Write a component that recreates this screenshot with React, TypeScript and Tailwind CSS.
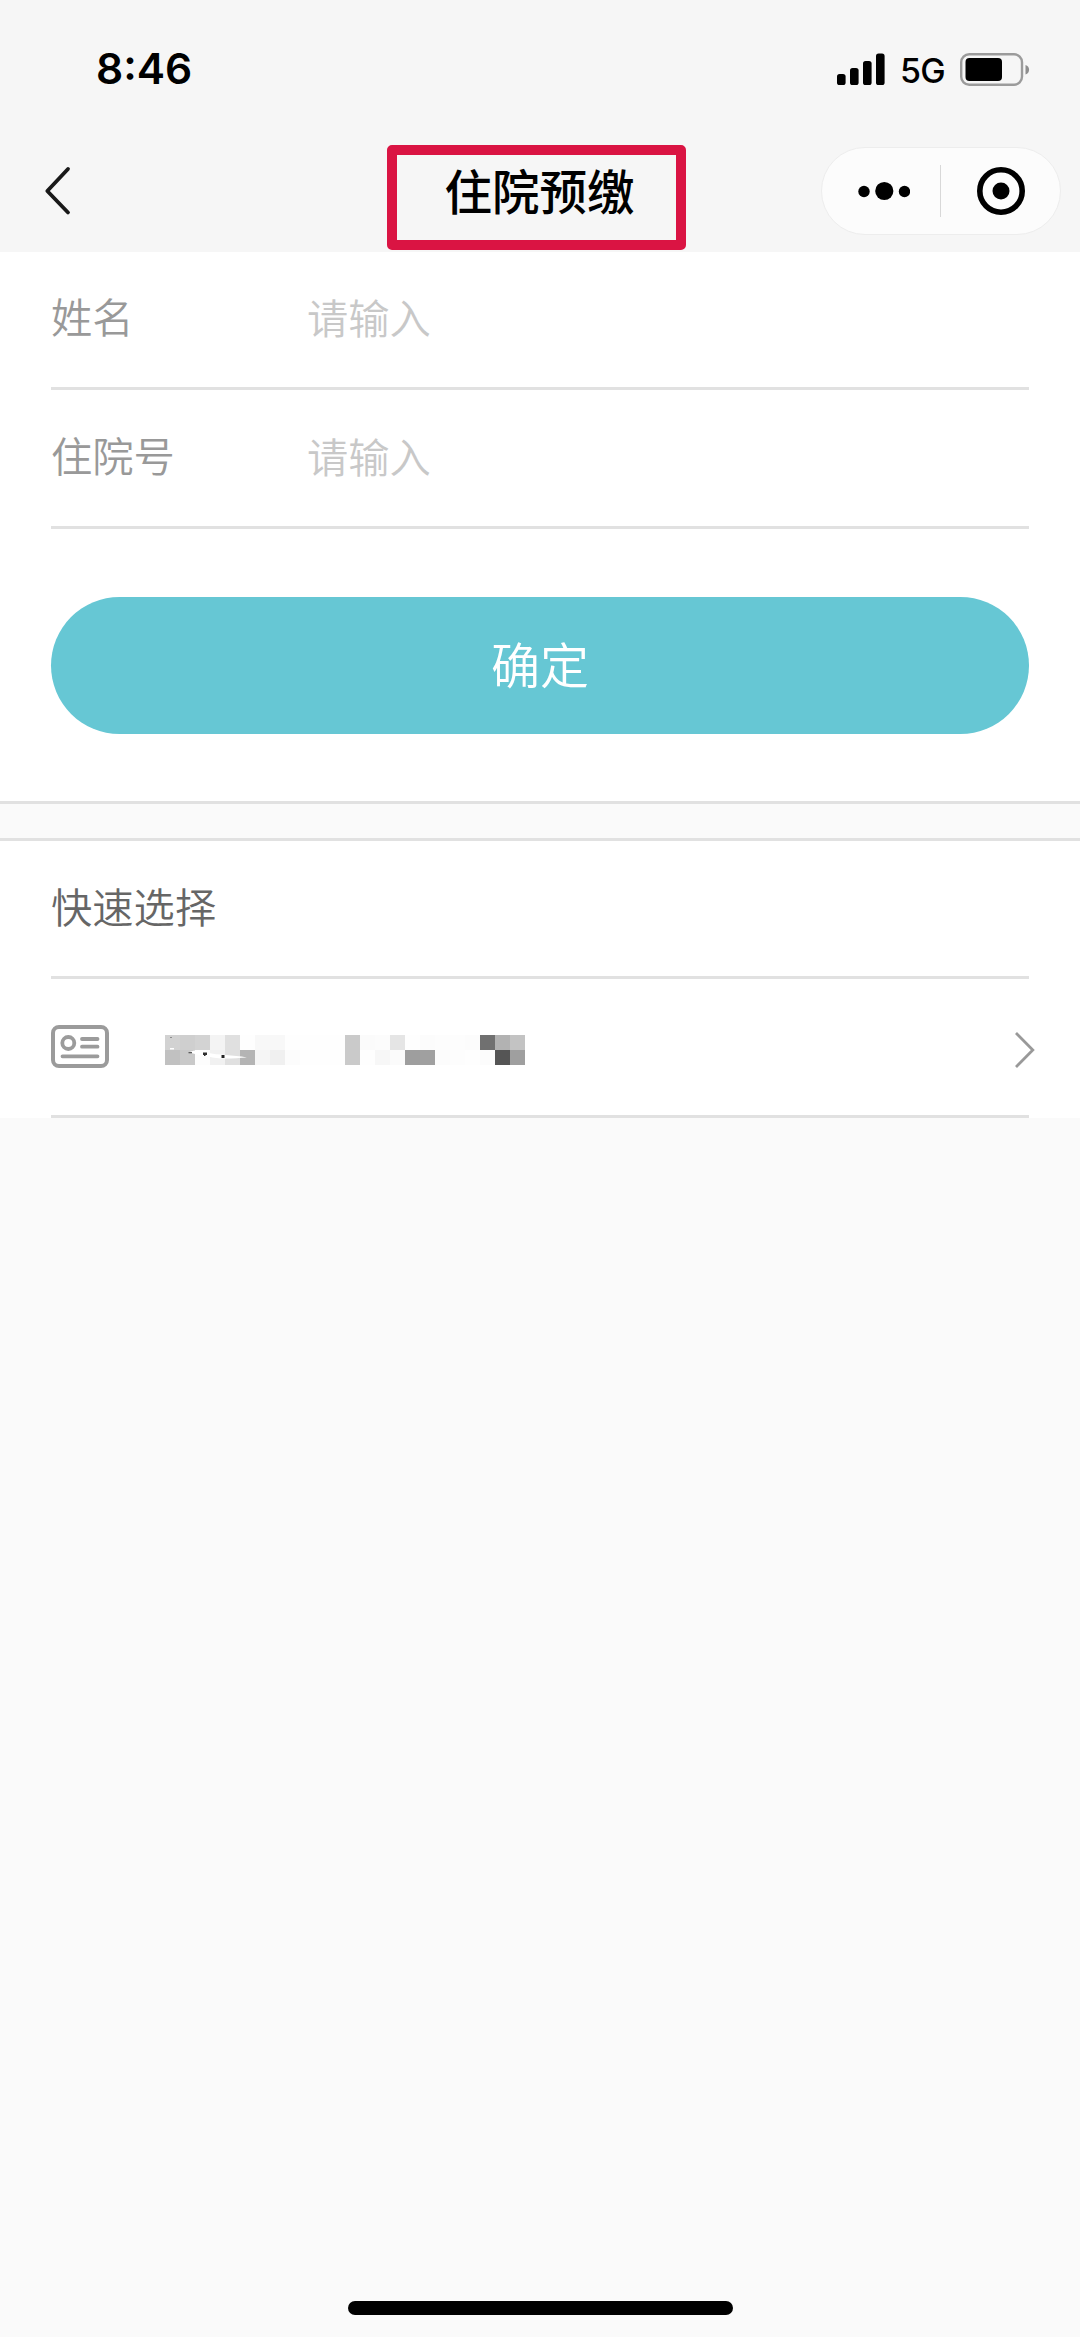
import { useState } from 'react'

// Mosaic cells covering the patient's name and number, 15px each
const maskRows = [
  [
    '#d2d2d2', '#cfcfcf', '#d3d3d3', '#f4f4f4', '#e0e0e0', '#fefefe', '#f8f8f8', '#f8f8f8', '#fefefe', '#fefefe', '#fefefe', '#fefefe',
    '#cacaca', '#fbfbfb', '#fcfcfc', '#e5e5e5', '#fefefe', '#fcfcfc', '#fdfdfd', '#fdfdfd', '#fcfcfc', '#707070', '#b2b2b2', '#c3c3c3',
  ],
  [
    '#c1c1c1', '#c9c9c9', '#fdfdfd', '#f1f1f1', '#e0e0e0', '#b4b4b4', '#f5f5f5', '#f0f0f0', '#fcfcfc', '#fefefe', '#fefefe', '#fefefe',
    '#cacaca', '#fefefe', '#f7f7f7', '#fbfbfb', '#9e9e9e', '#a0a0a0', '#fcfcfc', '#fdfdfd', '#fefefe', '#fcfcfc', '#555555', '#9f9f9f',
  ],
]

const SignalIcon = () => (
  <svg width="48" height="33" viewBox="0 0 48 33" fill="#000">
    <rect x="0" y="21" width="8.6" height="11" rx="2.6" />
    <rect x="13" y="15" width="8.6" height="17" rx="2.6" />
    <rect x="26" y="8" width="8.6" height="24" rx="2.6" />
    <rect x="39" y="0.5" width="8.6" height="31.5" rx="2.6" />
  </svg>
)

const BatteryIcon = () => (
  <svg width="70" height="33" viewBox="0 0 70 33" fill="none">
    <rect x="1.2" y="1.2" width="60.800" height="30.600" rx="8" stroke="#9b9b9b" strokeWidth="2.4" />
    <rect x="5.5" y="5" width="36.5" height="23" rx="4" fill="#000" />
    <path d="M65.5 12c2.4.7 3.6 2.5 3.6 4.7s-1.2 4-3.6 4.7z" fill="#8e8e8e" />
  </svg>
)

const BackIcon = () => (
  <svg width="28" height="50" viewBox="0 0 28 50" fill="none" stroke="#191919" strokeWidth="3.8" strokeLinecap="round" strokeLinejoin="round">
    <path d="M25 3L4.300 25L25 46.500" />
  </svg>
)

const CardIcon = () => (
  <svg width="58" height="43" viewBox="0 0 58 43" fill="none" stroke="#9b9b9b" strokeLinecap="round">
    <rect x="2" y="2" width="54" height="39" rx="6" strokeWidth="4" />
    <circle cx="17.300" cy="18" r="6" strokeWidth="3.8" />
    <path d="M31 14h15.500M31 21.700h15.500M11.500 31.300h35" strokeWidth="3.8" />
  </svg>
)

const ArrowIcon = () => (
  <svg width="20" height="36" viewBox="0 0 20 36" fill="none" stroke="#999" strokeWidth="2.8">
    <path d="M1 1L17.800 18L1 35" />
  </svg>
)

// Brush marks left over the first part of the mosaic
const MaskSmudge = () => (
  <svg className="absolute top-0 left-0" width="90" height="30" viewBox="0 0 90 30">
    <path d="M24 17.500C29 14.500 37 14.500 42 17.500C53 20.500 68 19.500 82 22.500C68 23.500 52 24.500 44 21.500C37 21 31 19 24 17.500z" fill="#fff" />
    <path d="M5 13h4v1.500H5z" fill="#fff" />
    <path d="M5 2h2v1H5z" fill="#8c8c8c" />
    <path d="M23.500 17h3.500v1.300h-3.500z" fill="#5c5c5c" />
    <path d="M38 17.500h4v2.500h-1.500v1h-1.500v-1h-1z" fill="#2f2f2f" />
    <path d="M56.500 20h3v3h-3z" fill="#222" />
  </svg>
)

type FieldProps = {
  label: string
  value: string
  onChange: (value: string) => void
}

function Field({ label, value, onChange }: FieldProps) {
  return (
    <label className="flex h-[139px] items-center border-b-[3px] border-[#e1e1e1] pb-[6px]">
      <span className="w-[256px] text-[#999]">{label}</span>
      <input
        value={value}
        onChange={(e) => onChange(e.target.value)}
        placeholder="请输入"
        className="mt-[2px] h-[60px] flex-1 bg-transparent outline-none placeholder:text-[#c8c8c8]"
      />
    </label>
  )
}

export default function App() {
  const [name, setName] = useState('')
  const [admissionNo, setAdmissionNo] = useState('')

  return (
    <div className="flex h-[2337px] w-[1080px] flex-col overflow-hidden bg-[#fafafa] font-['Noto_Sans_CJK_SC',sans-serif] text-[41.3px] font-[350]">
      <header className="h-[252px] bg-[#f6f6f6]">
        {/* Status bar */}
        <div className="flex h-[145px] items-start justify-between pt-[52px] pr-[50px] pl-[96px] font-['Inter',sans-serif]">
          <span className="text-[42.5px] leading-[33px] font-semibold text-black">8:46</span>
          <div className="flex items-center">
            <SignalIcon />
            <span className="ml-[15px] w-[60px] pt-[2px] text-[34px] leading-[33px] font-medium tracking-[-0.8px] text-black">5G</span>
            <BatteryIcon />
          </div>
        </div>

        {/* Nav bar */}
        <div className="grid h-[105px] grid-cols-[387px_299px_1fr] items-start">
          <button className="mt-[21px] ml-[43px] w-[28px]">
            <BackIcon />
          </button>
          <h1 className="flex h-[105px] items-center justify-center rounded-[5px] border-[10px] border-[#da1443] pb-[16px] pl-[6px] text-[47.5px] font-medium text-black">
            住院预缴
          </h1>
          <div className="mt-[2px] mr-[19px] ml-auto flex h-[88px] w-[240px] items-center rounded-full border border-[#ededed] bg-[#fcfcfc]">
            <svg className="ml-[36px]" width="52" height="20" viewBox="0 0 52 20">
              <circle cx="6" cy="10.500" r="5.700" />
              <circle cx="26.300" cy="10" r="9.100" />
              <circle cx="46.500" cy="10.500" r="5.700" />
            </svg>
            <span className="ml-[30px] h-[52px] w-px bg-[#d8d8d8]" />
            <svg className="ml-[36px]" width="48" height="48" viewBox="0 0 48 48">
              <circle cx="24" cy="24" r="21.200" fill="none" stroke="#000" strokeWidth="5.600" />
              <circle cx="24" cy="24" r="8.500" />
            </svg>
          </div>
        </div>
      </header>

      {/* Form */}
      <section className="h-[552px] border-b-[3px] border-[#e1e1e1] bg-white px-[51px]">
        <div className="-mt-px">
          <Field label="姓名" value={name} onChange={setName} />
          <Field label="住院号" value={admissionNo} onChange={setAdmissionNo} />
        </div>
        <button className="mt-[68px] h-[137px] w-full rounded-full bg-[#66c7d4] pb-[5px] text-[49px] text-white">
          确定
        </button>
      </section>

      {/* Quick select */}
      <section className="mt-[34px] h-[280px] border-t-[3px] border-[#e1e1e1] bg-white px-[51px]">
        <h2 className="flex h-[138px] items-center border-b-[3px] border-[#e1e1e1] pb-[6px] text-[#666]">快速选择</h2>
        <div className="flex h-[139px] items-center border-b-[3px] border-[#e1e1e1]">
          <div className="mb-[2px]">
            <CardIcon />
          </div>
          <div className="relative mt-[5px] ml-[56px]">
            {maskRows.map((row, i) => (
              <div key={i} className="flex">
                {row.map((color, j) => (
                  <span key={j} className="h-[15px] w-[15px]" style={{ backgroundColor: color }} />
                ))}
              </div>
            ))}
            <MaskSmudge />
          </div>
          <div className="mt-[5px] -mr-[6px] ml-auto">
            <ArrowIcon />
          </div>
        </div>
      </section>

      {/* Home indicator */}
      <div className="mx-auto mt-auto mb-[22px] h-[14px] w-[385px] rounded-full bg-black" />
    </div>
  )
}
